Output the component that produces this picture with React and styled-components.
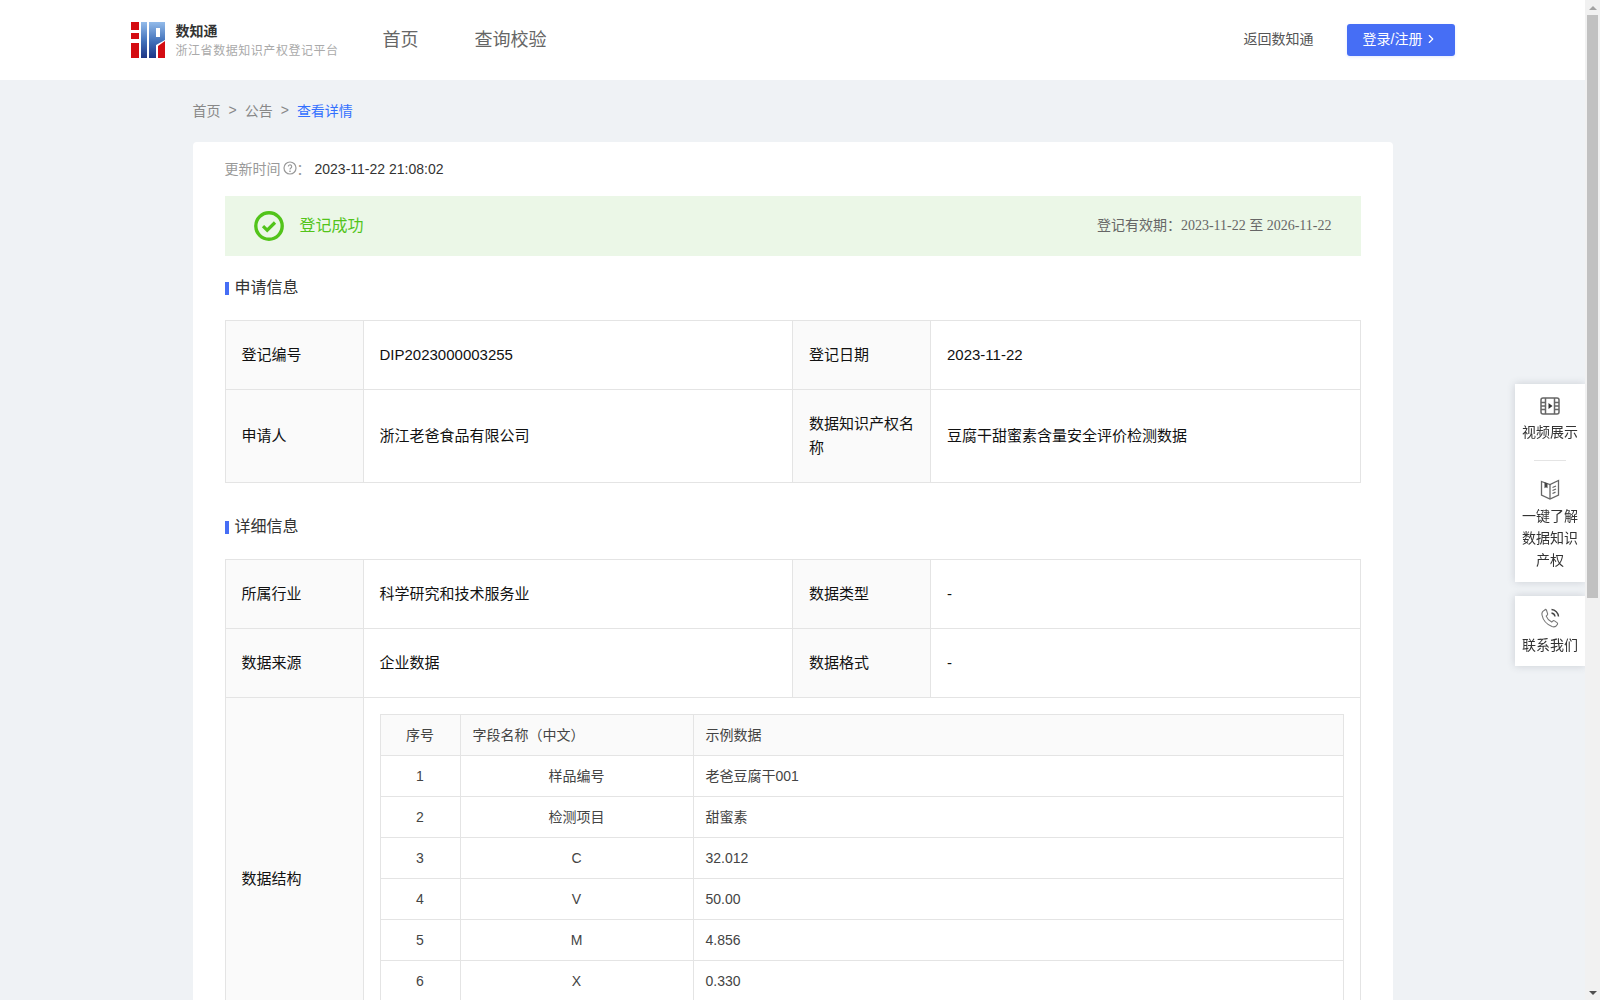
import React from "react";
import styled, { createGlobalStyle } from "styled-components";
import { ChevronRight } from "lucide-react";

const GlobalStyle = createGlobalStyle`
  html, body {
    margin: 0;
    padding: 0;
    background: #eff2f5;
  }
  body {
    font-family: "Liberation Sans", "Noto Sans CJK SC", sans-serif;
    font-size: 14px;
    color: #333;
  }
`;

const Page = styled.div`
  width: 1585px;
`;

const Header = styled.header`
  height: 80px;
  background: #fff;
`;

const HeaderInner = styled.div`
  width: 1324px;
  height: 100%;
  margin: 0 auto;
  display: flex;
  align-items: center;
`;

const Brand = styled.div`
  display: flex;
  align-items: center;
  gap: 11px;
  width: 252px;
`;

const BrandText = styled.div`
  display: flex;
  flex-direction: column;
  gap: 3px;
`;

const BrandName = styled.div`
  font-size: 14px;
  line-height: 18px;
  font-weight: 700;
  color: #333;
`;

const BrandSub = styled.div`
  font-size: 12px;
  line-height: 16px;
  letter-spacing: 0.55px;
  color: #aaa;
  white-space: nowrap;
`;

const Nav = styled.nav`
  display: flex;
  gap: 56px;
  flex: 1;
  padding-bottom: 4px;
`;

const NavLink = styled.a`
  font-size: 18px;
  color: #666;
`;

const BackLink = styled.a`
  font-size: 14px;
  color: #555;
  margin-right: 33px;
  padding-bottom: 4px;
`;

const LoginButton = styled.button`
  width: 108px;
  height: 32px;
  border: 0;
  border-radius: 3px;
  background: #466ef5;
  color: #fff;
  font: inherit;
  display: flex;
  align-items: center;
  justify-content: center;
  gap: 2px;
  padding: 0 0 4px;
  box-shadow: 0 1px 3px rgba(70, 110, 245, 0.15);

  svg {
    margin-top: 2px;
  }
`;

const Main = styled.main`
  width: 1200px;
  margin: 0 auto;
`;

const Crumbs = styled.div`
  box-sizing: border-box;
  height: 62px;
  padding-bottom: 3px;
  display: flex;
  align-items: center;
  gap: 8px;
  color: #888;
`;

const CrumbCurrent = styled.span`
  color: #3370ff;
`;

const Card = styled.section`
  background: #fff;
  border-radius: 4px;
  padding: 15px 32px 32px;
`;

const UpdateRow = styled.div`
  display: flex;
  align-items: center;
  height: 22px;
  color: #999;
`;

const HelpIcon = styled.svg`
  width: 14px;
  height: 14px;
  margin-left: 2px;
`;

const UpdateValue = styled.span`
  color: #333;
  margin-left: 4px;
  padding-top: 2px;
`;

const StatusBanner = styled.div`
  box-sizing: border-box;
  height: 60px;
  margin-top: 17px;
  padding: 0 29px;
  background: #ebf7e7;
  display: flex;
  align-items: center;
  justify-content: space-between;
`;

const StatusLeft = styled.div`
  display: flex;
  align-items: center;
  gap: 16px;
  font-size: 16px;
  color: #52c41a;
`;

const StatusText = styled.span`
  padding-bottom: 4px;
`;

const Validity = styled.div`
  font-family: "Liberation Serif", "Noto Sans CJK SC", serif;
  font-size: 14px;
  color: #666;
  padding-bottom: 4px;
`;

const SectionTitle = styled.h3`
  margin: ${(p) => p.$top}px 0 0;
  height: 22px;
  display: flex;
  align-items: center;
  gap: 6px;
  font-size: 16px;
  line-height: 22px;
  font-weight: 400;
  color: #333;

  &::before {
    content: "";
    width: 4px;
    height: 13px;
    margin-top: 1px;
    background: #466ef5;
  }
`;

const InfoTable = styled.table`
  width: 100%;
  margin-top: 21px;
  border-collapse: collapse;
  table-layout: fixed;
  font-size: 15px;
  line-height: 24px;
  color: #111;
`;

const LabelCol = styled.col`
  width: 138px;
`;

const LabelCell = styled.td`
  border: 1px solid #e4e4e4;
  padding: 22px 16px;
  vertical-align: middle;
  background: #fafafa;
`;

const ValueCell = styled.td`
  border: 1px solid #e4e4e4;
  padding: ${(p) => (p.$nested ? "16px" : "22px 16px")};
  vertical-align: middle;
`;

const DataTable = styled.table`
  width: 100%;
  border-collapse: collapse;
  table-layout: fixed;
  font-size: 14px;
  line-height: 20px;
  color: #444;
`;

const NoCol = styled.col`
  width: 80px;
`;

const NameCol = styled.col`
  width: 233px;
`;

const DataHead = styled.th`
  border: 1px solid #e4e4e4;
  height: 40px;
  padding: 0 12px;
  font-weight: 400;
  background: #fafafa;
  text-align: ${(p) => (p.$center ? "center" : "left")};
`;

const DataCell = styled.td`
  border: 1px solid #e4e4e4;
  height: 40px;
  padding: 0 12px;
  text-align: ${(p) => (p.$center ? "center" : "left")};
`;

const SideDock = styled.aside`
  position: fixed;
  top: 384px;
  right: 15px;
  width: 70px;
  display: flex;
  flex-direction: column;
  gap: 14px;
`;

const DockPanel = styled.div`
  background: #fff;
  box-shadow: 0 0 8px rgba(60, 70, 90, 0.2);
`;

const DockItem = styled.div`
  display: flex;
  flex-direction: column;
  align-items: center;
  padding: ${(p) => p.$pad};
  font-size: 14px;
  line-height: 22px;
  color: #333;
  text-align: center;
`;

const DockDivider = styled.div`
  width: 32px;
  height: 1px;
  margin: 17px auto 0;
  background: #e4e4e4;
`;

const DockIcon = styled.svg`
  width: 22px;
  height: 22px;
  margin-bottom: ${(p) => p.$below || 5}px;
`;

const ScrollRail = styled.div`
  position: fixed;
  top: 0;
  right: 0;
  bottom: 0;
  width: 15px;
  display: flex;
  flex-direction: column;
  background: #f1f1f1;
`;

const ScrollArrow = styled.div`
  height: 15px;
  display: flex;
  align-items: center;
  justify-content: center;
  margin-top: ${(p) => (p.$down ? "auto" : "0")};

  &::before {
    content: "";
    border-left: 4px solid transparent;
    border-right: 4px solid transparent;
    border-top: ${(p) => (p.$down ? "4px solid #505050" : "0")};
    border-bottom: ${(p) => (p.$down ? "0" : "4px solid #a3a3a3")};
  }
`;

const ScrollThumb = styled.div`
  width: 11px;
  height: 583px;
  margin-left: 2px;
  background: #c1c1c1;
`;

const Logo = () => (
  <svg width="34" height="36" viewBox="0 0 34 36">
    <defs>
      <linearGradient id="logoBlue" x1="0" y1="0" x2="0" y2="1">
        <stop offset="0" stopColor="#93bbea" />
        <stop offset="0.55" stopColor="#3f6fb8" />
        <stop offset="1" stopColor="#1d3585" />
      </linearGradient>
    </defs>
    <rect x="0" y="0" width="8" height="8" fill="#d40c12" />
    <rect x="0" y="11" width="8" height="6" fill="#d40c12" />
    <rect x="0" y="21" width="8" height="15" fill="#d40c12" />
    <rect x="10" y="0" width="6" height="36" fill="url(#logoBlue)" />
    <path
      d="M18 0h16v18l-9 5v13h-7zM25 6v9h4V6z"
      fill="url(#logoBlue)"
      fillRule="evenodd"
    />
    <path d="M27 36V24l7-5v17z" fill="#d40c12" />
  </svg>
);

// the last row sits below the fold in the screenshot, its content is not readable
const dataRows = [
  ["1", "样品编号", "老爸豆腐干001"],
  ["2", "检测项目", "甜蜜素"],
  ["3", "C", "32.012"],
  ["4", "V", "50.00"],
  ["5", "M", "4.856"],
  ["6", "X", "0.330"],
  ["", "", ""],
];

export default function App() {
  return (
    <Page>
      <GlobalStyle />
      <Header>
        <HeaderInner>
          <Brand>
            <Logo />
            <BrandText>
              <BrandName>数知通</BrandName>
              <BrandSub>浙江省数据知识产权登记平台</BrandSub>
            </BrandText>
          </Brand>
          <Nav>
            <NavLink>首页</NavLink>
            <NavLink>查询校验</NavLink>
          </Nav>
          <BackLink>返回数知通</BackLink>
          <LoginButton>
            登录/注册
            <ChevronRight size={14} strokeWidth={2} />
          </LoginButton>
        </HeaderInner>
      </Header>

      <Main>
        <Crumbs>
          <span>首页</span>
          <span>&gt;</span>
          <span>公告</span>
          <span>&gt;</span>
          <CrumbCurrent>查看详情</CrumbCurrent>
        </Crumbs>

        <Card>
          <UpdateRow>
            更新时间
            <HelpIcon viewBox="0 0 14 14" fill="none" stroke="#999">
              <circle cx="7" cy="7" r="6" strokeWidth="1.2" />
              <path d="M5.3 5.6a1.7 1.7 0 1 1 2.6 1.4c-.6.4-.9.7-.9 1.4" strokeWidth="1.1" />
              <circle cx="7" cy="10.2" r=".4" fill="#999" />
            </HelpIcon>
            ：<UpdateValue>2023-11-22 21:08:02</UpdateValue>
          </UpdateRow>

          <StatusBanner>
            <StatusLeft>
              <svg width="30" height="30" viewBox="0 0 30 30" fill="none" stroke="#52c41a">
                <circle cx="15" cy="15" r="13.2" strokeWidth="3.4" />
                <path d="M9 15.2l4.2 4L21 11.5" strokeWidth="3.2" />
              </svg>
              <StatusText>登记成功</StatusText>
            </StatusLeft>
            <Validity>登记有效期：2023-11-22 至 2026-11-22</Validity>
          </StatusBanner>

          <SectionTitle $top={21}>申请信息</SectionTitle>
          <InfoTable>
            <colgroup>
              <LabelCol />
              <col />
              <LabelCol />
              <col />
            </colgroup>
            <tbody>
              <tr>
                <LabelCell>登记编号</LabelCell>
                <ValueCell>DIP2023000003255</ValueCell>
                <LabelCell>登记日期</LabelCell>
                <ValueCell>2023-11-22</ValueCell>
              </tr>
              <tr>
                <LabelCell>申请人</LabelCell>
                <ValueCell>浙江老爸食品有限公司</ValueCell>
                <LabelCell>数据知识产权名称</LabelCell>
                <ValueCell>豆腐干甜蜜素含量安全评价检测数据</ValueCell>
              </tr>
            </tbody>
          </InfoTable>

          <SectionTitle $top={33}>详细信息</SectionTitle>
          <InfoTable>
            <colgroup>
              <LabelCol />
              <col />
              <LabelCol />
              <col />
            </colgroup>
            <tbody>
              <tr>
                <LabelCell>所属行业</LabelCell>
                <ValueCell>科学研究和技术服务业</ValueCell>
                <LabelCell>数据类型</LabelCell>
                <ValueCell>-</ValueCell>
              </tr>
              <tr>
                <LabelCell>数据来源</LabelCell>
                <ValueCell>企业数据</ValueCell>
                <LabelCell>数据格式</LabelCell>
                <ValueCell>-</ValueCell>
              </tr>
              <tr>
                <LabelCell>数据结构</LabelCell>
                <ValueCell $nested colSpan={3}>
                  <DataTable>
                    <colgroup>
                      <NoCol />
                      <NameCol />
                      <col />
                    </colgroup>
                    <thead>
                      <tr>
                        <DataHead $center>序号</DataHead>
                        <DataHead>字段名称（中文）</DataHead>
                        <DataHead>示例数据</DataHead>
                      </tr>
                    </thead>
                    <tbody>
                      {dataRows.map((row, idx) => (
                        <tr key={idx}>
                          <DataCell $center>{row[0]}</DataCell>
                          <DataCell $center>{row[1]}</DataCell>
                          <DataCell>{row[2]}</DataCell>
                        </tr>
                      ))}
                    </tbody>
                  </DataTable>
                </ValueCell>
              </tr>
            </tbody>
          </InfoTable>
        </Card>
      </Main>

      <SideDock>
        <DockPanel>
          <DockItem $pad="11px 6px 0">
            <DockIcon $below={4} viewBox="0 0 22 22" fill="none" stroke="#666" strokeWidth="1.5">
              <rect x="2" y="3" width="18" height="16" rx="2" />
              <path d="M6.500 3v16M15.500 3v16M2 7.500h4.500M2 11h4.500M2 14.500h4.500M15.500 7.500H20M15.500 11H20M15.500 14.500H20" />
              <path d="M9.500 8l4 3-4 3z" fill="#333" stroke="none" />
            </DockIcon>
            视频展示
            <DockDivider />
          </DockItem>
          <DockItem $pad="17px 6px 11px">
            <DockIcon viewBox="0 0 22 22" fill="none" stroke="#666" strokeWidth="1.3">
              <path d="M2.500 3.500L11 6.500l8.500-4V17L11 21l-8.500-4z" />
              <path d="M11 6.500V21" />
              <path d="M5.500 4.200v6l1.500-1 1.500 1V5.500z" fill="#444" stroke="none" />
              <path d="M13.500 9.500l3.500-1.500M13.500 12.500l3.500-1.500M13.500 15.500l3-1.300" />
            </DockIcon>
            一键了解数据知识产权
          </DockItem>
        </DockPanel>
        <DockPanel>
          <DockItem $pad="11px 6px 10px">
            <DockIcon viewBox="0 0 22 22" fill="none" stroke="#777" strokeWidth="1.1">
              <path d="M6 3c-2 .8-3.500 2.500-3 5 1 5 5 9.500 10 11.500 2.300.8 4.500-.3 5.500-2.300.3-.6 0-1.200-.5-1.600l-2.500-1.700c-.6-.4-1.300-.3-1.800.2l-1 1c-2.500-1.200-4.500-3.500-5.500-6l1-1c.5-.5.6-1.200.3-1.800l-1-3c-.3-.7-1-1-1.500-.8z" />
              <path d="M12.500 2.500a7.500 7.500 0 0 1 7 7M12.500 6a4 4 0 0 1 3.500 3.500" stroke="#444" strokeWidth="1.400" />
            </DockIcon>
            联系我们
          </DockItem>
        </DockPanel>
      </SideDock>

      <ScrollRail>
        <ScrollArrow />
        <ScrollThumb />
        <ScrollArrow $down />
      </ScrollRail>
    </Page>
  );
}
